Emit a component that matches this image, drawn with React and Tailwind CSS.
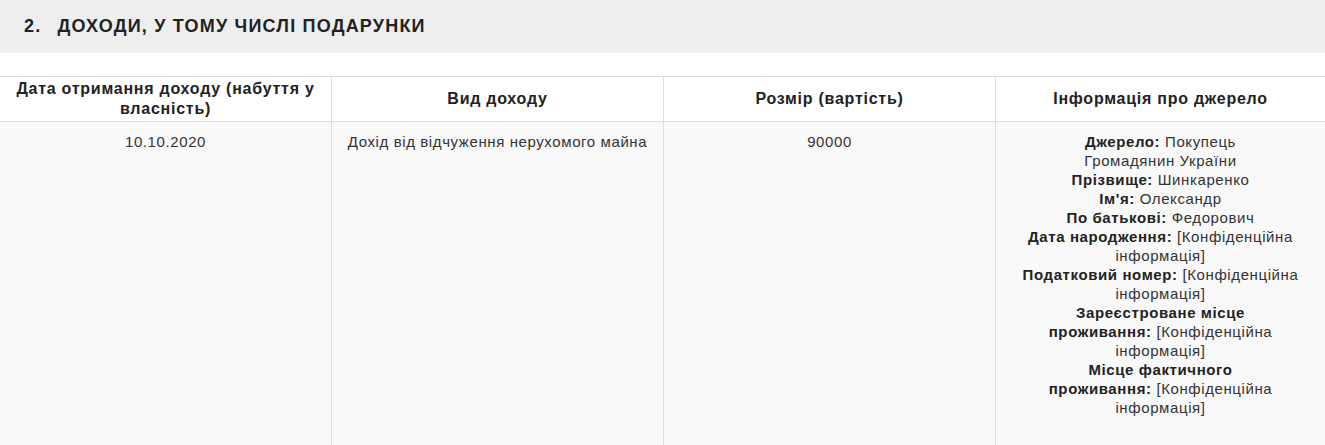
import React from "react";

// lines as they wrap in the source column
const sourceLines = [
  ["Джерело:", "Покупець"],
  [null, "Громадянин України"],
  ["Прізвище:", "Шинкаренко"],
  ["Ім'я:", "Олександр"],
  ["По батькові:", "Федорович"],
  ["Дата народження:", "[Конфіденційна"],
  [null, "інформація]"],
  ["Податковий номер:", "[Конфіденційна"],
  [null, "інформація]"],
  ["Зареєстроване місце", null],
  ["проживання:", "[Конфіденційна"],
  [null, "інформація]"],
  ["Місце фактичного", null],
  ["проживання:", "[Конфіденційна"],
  [null, "інформація]"],
];

const App = () => {
  return (
    <div className="min-h-screen bg-white text-[#333] font-['Liberation_Sans',Arial,sans-serif]">
      {/* Section title */}
      <div className="bg-[#eeeeee] h-[53px] flex items-center px-6">
        <h2 className="text-[18px] tracking-[1.2px] font-bold text-[#222] uppercase">
          <span className="mr-[16px]">2.</span>
          ДОХОДИ, У ТОМУ ЧИСЛІ ПОДАРУНКИ
        </h2>
      </div>

      {/* Table */}
      <div className="mt-[23px] border-t border-[#dddddd]">
        <div className="grid grid-cols-[331px_332px_332px_1fr] border-b border-[#dddddd] h-[45px] text-[16px] tracking-[0.75px] font-bold text-[#222]">
          <div className="flex items-center justify-center text-center px-2 leading-[20px]">
            Дата отримання доходу (набуття у власність)
          </div>
          <div className="flex items-center justify-center text-center px-2 border-l border-[#dddddd]">
            Вид доходу
          </div>
          <div className="flex items-center justify-center text-center px-2 border-l border-[#dddddd]">
            Розмір (вартість)
          </div>
          <div className="flex items-center justify-center text-center px-2 border-l border-[#dddddd]">
            Інформація про джерело
          </div>
        </div>
        <div className="grid grid-cols-[331px_332px_332px_1fr] bg-[#f9f9f9] min-h-[330px] text-[15px] tracking-[0.6px] leading-[19px]">
          <div className="text-center px-2 pt-[10px]">10.10.2020</div>
          <div className="text-center px-2 pt-[10px] border-l border-[#dddddd]">
            Дохід від відчуження нерухомого майна
          </div>
          <div className="text-center px-2 pt-[10px] border-l border-[#dddddd]">90000</div>
          <div className="border-l border-[#dddddd] pt-[10px] pb-6 flex flex-col items-center">
            {sourceLines.map(([label, value], i) => (
              <div key={i} className="whitespace-nowrap text-center">
                {label && <b className="text-[#222]">{label}</b>}
                {label && value && " "}
                {value}
              </div>
            ))}
          </div>
        </div>
      </div>
    </div>
  );
};

export default App;
